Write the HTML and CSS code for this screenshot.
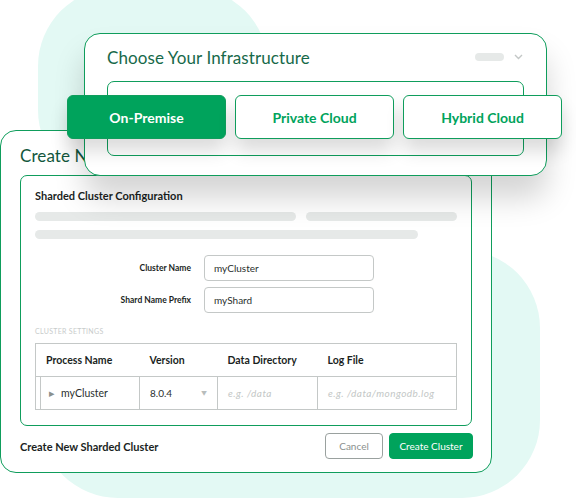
FILE: index.html
```html
<!DOCTYPE html>
<html lang="en">
<head>
    <meta charset="UTF-8">
    <meta name="viewport" content="width=device-width, initial-scale=1.0">
    <title>Sharded Cluster - Infrastructure</title>
    <link rel="stylesheet" href="styles.css">
</head>
<body>
    <div class="stage">
        <div class="blob blob-top"></div>
        <div class="blob blob-bottom"></div>

        <div class="card create-card">
            <h2 class="card-title">Create New Sharded Cluster</h2>
            <div class="panel">
                <h3 class="panel-title">Sharded Cluster Configuration</h3>
                <div class="skeleton-row">
                    <span class="bar bar-a"></span>
                    <span class="bar bar-b"></span>
                </div>
                <div class="skeleton-row">
                    <span class="bar bar-c"></span>
                </div>

                <div class="form">
                    <div class="form-row">
                        <label for="cluster_name">Cluster Name</label>
                        <input id="cluster_name" type="text" value="myCluster">
                    </div>
                    <div class="form-row">
                        <label for="shard_prefix">Shard Name Prefix</label>
                        <input id="shard_prefix" type="text" value="myShard">
                    </div>
                </div>

                <div class="section-label">CLUSTER SETTINGS</div>
                <table class="settings">
                    <colgroup>
                        <col style="width: 5px">
                        <col style="width: 99px">
                        <col style="width: 78px">
                        <col style="width: 100px">
                        <col style="width: 139px">
                    </colgroup>
                    <thead>
                        <tr>
                            <th colspan="2">Process Name</th>
                            <th>Version</th>
                            <th>Data Directory</th>
                            <th>Log File</th>
                        </tr>
                    </thead>
                    <tbody>
                        <tr>
                            <td class="gutter"></td>
                            <td class="proc"><span class="caret">&#9656;</span>myCluster</td>
                            <td><span class="version">8.0.4</span><span class="drop">&#9660;</span></td>
                            <td class="ph">e.g. /data</td>
                            <td class="ph">e.g. /data/mongodb.log</td>
                        </tr>
                    </tbody>
                </table>
            </div>
            <div class="footer">
                <span class="footer-title">Create New Sharded Cluster</span>
                <div class="actions">
                    <button class="btn btn-ghost">Cancel</button>
                    <button class="btn btn-primary">Create Cluster</button>
                </div>
            </div>
        </div>

        <div class="card infra-card">
            <div class="infra-head">
                <h2 class="card-title">Choose Your Infrastructure</h2>
                <div class="head-tools">
                    <span class="pill"></span>
                    <svg width="9" height="6" viewBox="0 0 9 6"><path d="M1 1l3.5 3.5L8 1" fill="none" stroke="#c3c7c6" stroke-width="1.4"/></svg>
                </div>
            </div>
            <div class="infra-box"></div>
        </div>

        <div class="choices">
            <button class="choice active">On-Premise</button>
            <button class="choice">Private Cloud</button>
            <button class="choice">Hybrid Cloud</button>
        </div>
    </div>
</body>
</html>
```

FILE: styles.css
```css
* {
    box-sizing: border-box;
}
body {
    margin: 0;
    background: #fff;
    font-family: 'Lato', 'Inter', Arial, sans-serif;
    color: #1b1f1e;
}
.stage {
    position: relative;
    width: 576px;
    height: 499px;
    overflow: hidden;
}
.blob {
    position: absolute;
    background: #e3f9f4;
}
.blob-top {
    left: 38px;
    top: -12px;
    width: 230px;
    height: 200px;
    border-radius: 78px;
}
.blob-bottom {
    left: 40px;
    top: 250px;
    width: 500px;
    height: 248px;
    border-radius: 78px;
}

.card {
    position: absolute;
    background: #fff;
    border: 1px solid #0f9d5c;
    border-radius: 16px;
}
.card-title {
    margin: 0;
    font-size: 17px;
    font-weight: 400;
    color: #17694a;
    letter-spacing: 0.1px;
}

/* front dialog */
.create-card {
    left: 0;
    top: 130px;
    width: 492px;
    height: 343px;
    padding: 14px 20px 0 19px;
}
.create-card .card-title {
    line-height: 22px;
    height: 22px;
    color: #13573d;
}
.panel {
    margin-top: 8px;
    width: 452px;
    height: 251px;
    border: 1px solid #0f9d5c;
    border-radius: 7px;
    padding: 12px 14px 0 14px;
}
.panel-title {
    margin: 0;
    font-size: 11px;
    font-weight: 700;
    line-height: 16px;
    color: #1b1f1e;
}
.skeleton-row {
    display: flex;
    gap: 10px;
    margin-top: 8px;
}
.skeleton-row + .skeleton-row {
    margin-top: 9px;
}
.bar {
    display: block;
    height: 9px;
    border-radius: 5px;
    background: #e6e9e8;
}
.bar-a { width: 261px; }
.bar-b { width: 151px; }
.bar-c { width: 383px; }

.form {
    display: flex;
    flex-direction: column;
    gap: 6px;
    margin-top: 16px;
}
.form-row {
    display: flex;
    align-items: center;
    gap: 13px;
}
.form-row label {
    width: 156px;
    text-align: right;
    font-size: 8.5px;
    font-weight: 700;
    color: #1b1f1e;
}
.form-row input {
    width: 170px;
    height: 26px;
    border: 1px solid #c4c8c7;
    border-radius: 4px;
    padding: 0 9px;
    font-family: inherit;
    font-size: 10px;
    color: #2a2f2e;
    background: #fff;
}
.section-label {
    margin-top: 13px;
    font-size: 7px;
    letter-spacing: 0.3px;
    color: #c8cccb;
    line-height: 10px;
}
.settings {
    margin-top: 7px;
    width: 421px;
    border-collapse: collapse;
    table-layout: fixed;
}
.settings th,
.settings td {
    height: 33px;
    border: 1px solid #c4c8c7;
    text-align: left;
    font-size: 10.5px;
    padding: 0 10px;
    white-space: nowrap;
    overflow: hidden;
}
.settings thead th {
    border-right: none;
    border-left: none;
    font-weight: 700;
    color: #1b1f1e;
}
.settings thead th:first-child {
    border-left: 1px solid #c4c8c7;
}
.settings thead th:last-child {
    border-right: 1px solid #c4c8c7;
}
.settings td.gutter {
    padding: 0;
}
.settings td.proc {
    padding-left: 8px;
    color: #2a2f2e;
}
.caret {
    color: #8a908e;
    font-size: 11px;
    margin-right: 6px;
}
.version {
    font-size: 10px;
    color: #2a2f2e;
}
.drop {
    float: right;
    font-size: 6px;
    color: #b8bdbc;
    margin-top: 3px;
}
.settings td.ph {
    color: #c3c7c6;
    font-style: italic;
    font-size: 10px;
    letter-spacing: 0.45px;
}

.footer {
    display: flex;
    justify-content: space-between;
    align-items: center;
    margin-top: 7px;
    width: 453px;
}
.footer-title {
    font-size: 11px;
    font-weight: 700;
    color: #1b1f1e;
}
.actions {
    display: flex;
    gap: 6px;
}
.btn {
    height: 26px;
    border-radius: 4px;
    font-family: inherit;
    font-size: 10px;
    padding: 0;
}
.btn-ghost {
    width: 58px;
    background: #fff;
    border: 1px solid #9aa19f;
    color: #8a908e;
}
.btn-primary {
    width: 84px;
    background: #00a35c;
    border: 1px solid #00a35c;
    color: #fff;
}

/* infrastructure picker */
.infra-card {
    left: 84px;
    top: 33px;
    width: 463px;
    height: 143px;
    padding: 10px 23px 0 22px;
    box-shadow: 0 22px 30px rgba(0, 0, 0, 0.17);
}
.infra-head {
    display: flex;
    justify-content: space-between;
    align-items: center;
    height: 26px;
}
.head-tools {
    display: flex;
    align-items: center;
    gap: 10px;
}
.pill {
    display: block;
    width: 29px;
    height: 8px;
    border-radius: 4px;
    background: #e6e9e8;
}
.infra-box {
    margin-top: 11px;
    width: 417px;
    height: 75px;
    border: 1px solid #0f9d5c;
    border-radius: 7px;
}

.choices {
    position: absolute;
    left: 67px;
    top: 95px;
    display: flex;
    gap: 9px;
}
.choice {
    width: 159px;
    height: 44px;
    border: 1px solid #0f9d5c;
    border-radius: 6px;
    background: #fff;
    color: #00a35c;
    font-family: inherit;
    font-size: 14px;
    font-weight: 700;
    box-shadow: 0 12px 18px rgba(0, 0, 0, 0.14);
}
.choice.active {
    background: #00a35c;
    color: #fff;
}
```
